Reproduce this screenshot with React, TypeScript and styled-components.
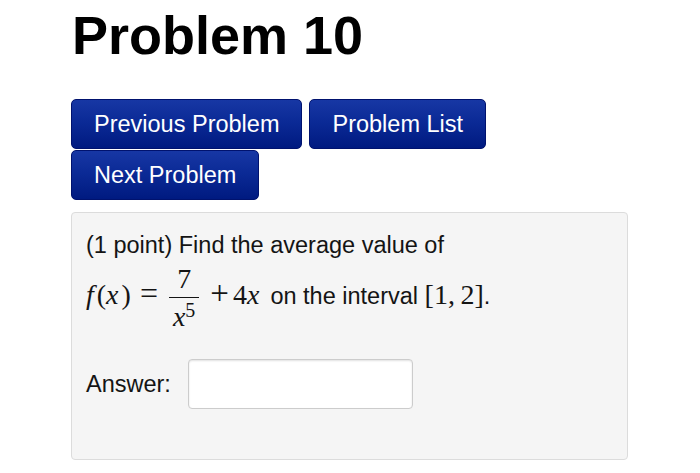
import styled, { createGlobalStyle } from 'styled-components'

const GlobalStyle = createGlobalStyle`
  body {
    margin: 0;
    background: #ffffff;
    font-family: "Liberation Sans", Arial, sans-serif;
  }
`

const Page = styled.div`
  padding: 6px 0 0 71px;
  width: 557px;
`

const Title = styled.h1`
  margin: 0 0 34px 1px;
  font-size: 54px;
  line-height: 59px;
  font-weight: 700;
  color: #000;
`

const Nav = styled.div`
  display: flex;
  flex-wrap: wrap;
  column-gap: 7px;
  row-gap: 1px;
  width: 557px;
`

const NavButton = styled.button`
  height: 50px;
  padding: 0 22px;
  border: 1px solid #00126e;
  border-radius: 5px;
  background: linear-gradient(to bottom, #1737a4 0%, #0b2a96 45%, #001a80 100%);
  color: #ffffff;
  font-family: "Liberation Sans", Arial, sans-serif;
  font-size: 23.5px;
  cursor: pointer;
`

const ProblemBox = styled.div`
  margin-top: 12px;
  box-sizing: border-box;
  width: 557px;
  height: 248px;
  padding: 17px 14px 0 14px;
  background: #f5f5f5;
  border: 1px solid #dcdcdc;
  border-radius: 4px;
  color: #141414;
`

const Statement = styled.div`
  font-size: 23.5px;
  line-height: 30px;
`

const MathLine = styled.div`
  white-space: nowrap;
`

const Serif = styled.span<{ $after?: number }>`
  font-family: "Liberation Serif", "Times New Roman", serif;
  font-size: 28px;
  margin-right: ${(p) => p.$after ?? 0}px;
`

const Var = styled.i<{ $ic?: number }>`
  font-family: "Liberation Serif", "Times New Roman", serif;
  font-style: italic;
  margin-right: ${(p) => p.$ic ?? 0}px;
`

const Op = styled.span<{ $left: number, $right: number, $size?: number }>`
  font-family: "Liberation Serif", "Times New Roman", serif;
  font-size: ${(p) => p.$size ?? 28}px;
  margin: 0 ${(p) => p.$right}px 0 ${(p) => p.$left}px;
`

const Frac = styled.span`
  display: inline-flex;
  flex-direction: column;
  align-items: stretch;
  vertical-align: 16px;
  padding: 5px 0 0;
  font-family: "Liberation Serif", "Times New Roman", serif;
  font-size: 28px;
  line-height: 28px;
`

const Num = styled.span`
  text-align: center;
  padding: 0 4px;
`

const Bar = styled.span`
  height: 1px;
  margin-top: 4px;
  background: #141414;
`

const Den = styled.span`
  text-align: center;
  padding: 5px 4px 0;
`

const Sup = styled.sup`
  font-size: 20px;
  line-height: 0;
  vertical-align: 9px;
`

const AnswerRow = styled.div`
  display: flex;
  align-items: center;
  gap: 17px;
  margin-top: 28px;
  font-size: 23.5px;
`

const AnswerInput = styled.input`
  box-sizing: border-box;
  width: 225px;
  height: 50px;
  border: 1px solid #cccccc;
  border-radius: 4px;
  background: #ffffff;
  box-shadow: inset 0 1px 2px rgba(0, 0, 0, 0.12);
  font-size: 20px;
  padding: 0 8px;
  outline: none;
`

export default function App () {
  return (
    <Page>
      <GlobalStyle />
      <Title>Problem 10</Title>

      <Nav>
        <NavButton>Previous Problem</NavButton>
        <NavButton>Problem List</NavButton>
        <NavButton>Next Problem</NavButton>
      </Nav>

      <ProblemBox>
        <Statement>
          <div>(1 point) Find the average value of</div>
          <MathLine>
            <Serif><Var $ic={3}>f</Var>(<Var $ic={3}>x</Var>)</Serif>
            <Op $left={9} $right={11} $size={32}>=</Op>
            <Frac>
              <Num>7</Num>
              <Bar />
              <Den><Var>x</Var><Sup>5</Sup></Den>
            </Frac>
            <Op $left={11} $right={4} $size={33}>+</Op>
            <Serif $after={11}>4<Var>x</Var></Serif>on the interval <Serif>[1,&#8201;2]</Serif>.
          </MathLine>
        </Statement>

        <AnswerRow>
          <span>Answer:</span>
          <AnswerInput type="text" />
        </AnswerRow>
      </ProblemBox>
    </Page>
  )
}
